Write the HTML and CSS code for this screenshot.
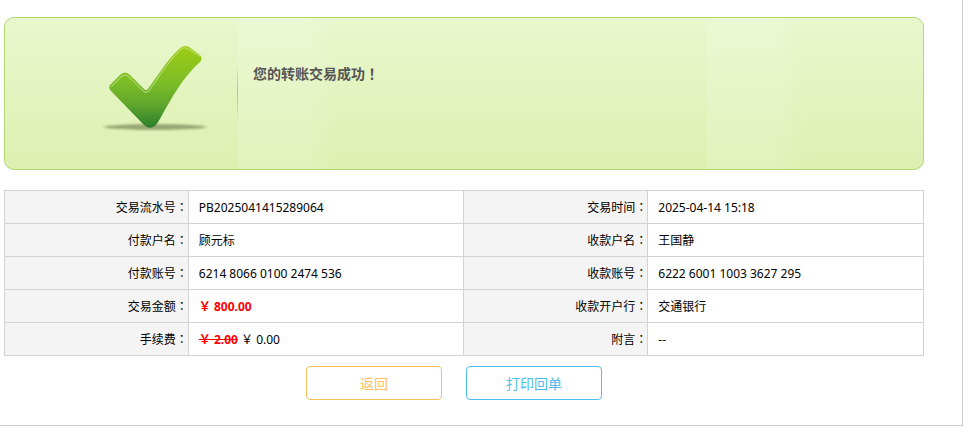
FILE: index.html
```html
<!DOCTYPE html>
<html lang="zh-CN">
    <head>
        <meta charset="UTF-8" />
        <meta name="viewport" content="width=device-width, initial-scale=1.0" />
        <title>转账结果</title>
        <link rel="stylesheet" href="styles.css">
    </head>

    <body>
        <main class="panel">
            <section class="banner">
                <div class="banner-icon">
                    <svg width="110" height="90" viewBox="0 0 110 90" aria-hidden="true">
                        <defs>
                            <linearGradient id="tick" x1="0" y1="0" x2="0" y2="1">
                                <stop offset="0" stop-color="#9dcc12" />
                                <stop offset="0.45" stop-color="#7dbd28" />
                                <stop offset="0.72" stop-color="#5fa62c" />
                                <stop offset="1" stop-color="#2c7d2c" />
                            </linearGradient>
                            <filter id="soft" x="-20%" y="-100%" width="140%" height="300%">
                                <feGaussianBlur stdDeviation="2 1" />
                            </filter>
                        </defs>
                        <ellipse cx="54" cy="83" rx="51" ry="3" fill="#8c9a68" fill-opacity="0.85" filter="url(#soft)" />
                        <path
                            d="M9 41 Q7 44 10 47 L43 81 Q48 86 54 82 Q57 79 60 73 C71 53 83 32 99 18 Q102 15 99 11 L88 3 Q83 0 78 5 C66 16 56 33 47 45 Q45 47 43 45 L29 31 Q24 26 19 31 Z"
                            fill="url(#tick)"
                        />
                        <path
                            d="M10 43 L20 33 Q24 29 28 33 L42 47 Q45 50 48 47 C57 34 67 18 79 6 Q83 2 87 5 L99 12"
                            fill="none"
                            stroke="#d6edb0"
                            stroke-opacity="0.7"
                        />
                    </svg>
                </div>
                <div class="banner-line"></div>
                <h1 class="banner-title">您的转账交易成功<span class="mark" lang="zh-TW">！</span></h1>
            </section>

            <table class="detail">
                <tr>
                    <th scope="row">交易流水号<span class="mark" lang="zh-TW">：</span></th>
                    <td>PB2025041415289064</td>
                    <th scope="row">交易时间<span class="mark" lang="zh-TW">：</span></th>
                    <td>2025-04-14 15:18</td>
                </tr>
                <tr>
                    <th scope="row">付款户名<span class="mark" lang="zh-TW">：</span></th>
                    <td>顾元标</td>
                    <th scope="row">收款户名<span class="mark" lang="zh-TW">：</span></th>
                    <td>王国静</td>
                </tr>
                <tr>
                    <th scope="row">付款账号<span class="mark" lang="zh-TW">：</span></th>
                    <td>6214 8066 0100 2474 536</td>
                    <th scope="row">收款账号<span class="mark" lang="zh-TW">：</span></th>
                    <td>6222 6001 1003 3627 295</td>
                </tr>
                <tr>
                    <th scope="row">交易金额<span class="mark" lang="zh-TW">：</span></th>
                    <td><strong class="amount">￥ 800.00</strong></td>
                    <th scope="row">收款开户行<span class="mark" lang="zh-TW">：</span></th>
                    <td>交通银行</td>
                </tr>
                <tr>
                    <th scope="row">手续费<span class="mark" lang="zh-TW">：</span></th>
                    <td><del class="amount">￥ 2.00</del> ￥ 0.00</td>
                    <th scope="row">附言<span class="mark" lang="zh-TW">：</span></th>
                    <td>--</td>
                </tr>
            </table>

            <div class="actions">
                <button type="button" class="btn btn-back">返回</button>
                <button type="button" class="btn btn-print">打印回单</button>
            </div>
        </main>
    </body>
</html>
```

FILE: styles.css
```css
* {
    margin: 0;
    padding: 0;
    box-sizing: border-box;
}

body {
    font-family: "Noto Sans", "Noto Sans CJK SC", sans-serif;
    font-size: 12px;
    line-height: 20px;
    color: #000;
    background: #fff;
}

.panel {
    margin-right: 3px;
    padding: 17px 38px 25px 4px;
    border-right: 1px solid #ccc;
    border-bottom: 1px solid #ccc;
}

/* success banner */
.banner {
    display: flex;
    align-items: flex-start;
    min-height: 153px;
    border: 1px solid #b0d96f;
    border-radius: 10px;
    background:
        linear-gradient(to right, rgba(255, 255, 255, 0.12) 70px, rgba(255, 255, 255, 0)) 233px 0 / 100px 100% no-repeat,
        linear-gradient(to right, rgba(255, 255, 255, 0.12) 70px, rgba(255, 255, 255, 0)) 701px 0 / 100px 100% no-repeat,
        linear-gradient(#e9f7ce, #ddf0b0);
}

.banner-icon {
    width: 232px;
    padding: 26px 0 0 96px;
}

.banner-icon svg {
    display: block;
}

.banner-line {
    width: 1px;
    height: 60px;
    margin-top: 45px;
    background: linear-gradient(rgba(160, 205, 70, 0), #a5cf50, rgba(160, 205, 70, 0));
}

.banner-title {
    padding: 45px 0 0 15px;
    font-size: 14px;
    font-weight: bold;
    color: #555;
}

/* full-width punctuation, centred in its box */
.mark {
    font-family: "Noto Sans CJK TC", sans-serif;
}

.detail {
    width: 100%;
    margin-top: 20px;
    border-collapse: collapse;
    table-layout: fixed;
}

.detail th,
.detail td {
    height: 33px;
    border: 1px solid #d3d3d3;
}

.detail th {
    width: 20%;
    font-weight: normal;
    text-align: right;
    background: #f4f4f4;
}

.detail td {
    width: 30%;
    padding: 2px 0 0 10px;
}

.amount {
    font-weight: bold;
    color: #f00;
}

.actions {
    display: flex;
    justify-content: center;
    gap: 24px;
    margin-top: 10px;
    padding-right: 20px;
}

.btn {
    width: 136px;
    height: 34px;
    border: 1px solid;
    border-radius: 4px;
    background: #fff;
    font-family: inherit;
    font-size: 14px;
    cursor: pointer;
}

.btn-back {
    border-color: #fbbf5b;
    color: #fbbf5b;
}

.btn-print {
    border-color: #4fbdec;
    color: #4fbdec;
}
```
